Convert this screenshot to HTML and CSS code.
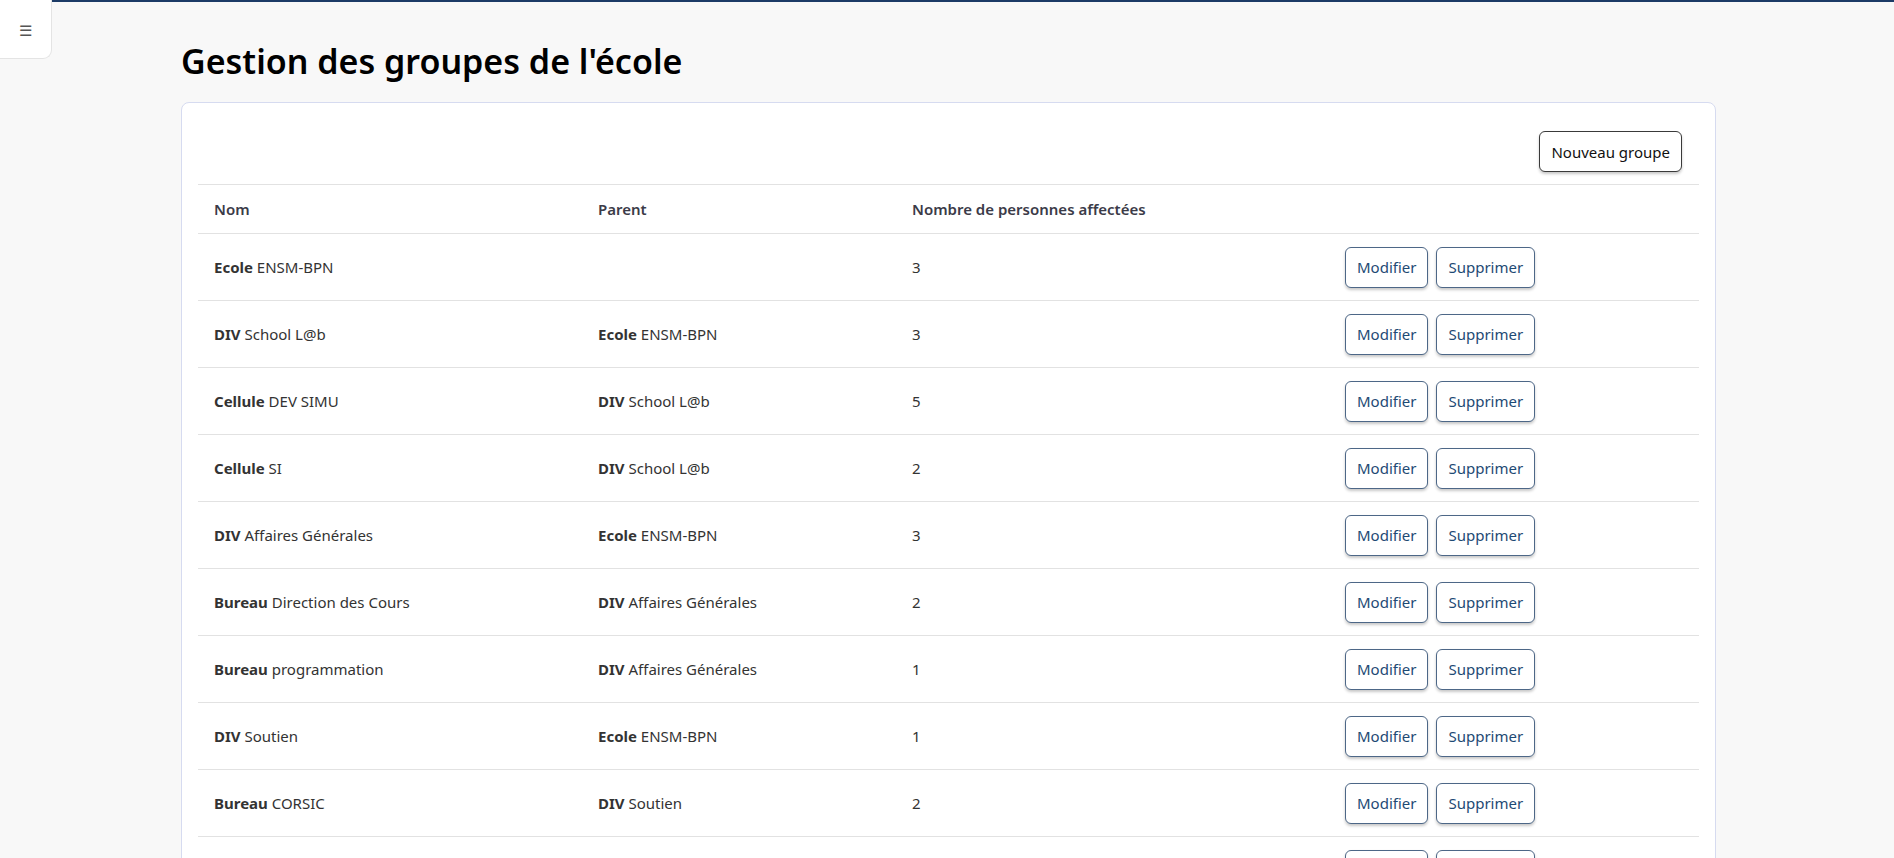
FILE: index.html
```html
<!DOCTYPE html>
<html lang="fr">
<head>
  <meta charset="UTF-8" />
  <meta name="viewport" content="width=device-width, initial-scale=1.0"/>
  <title>Gestion des groupes</title>
  <link rel="stylesheet" href="styles.css">
</head>
<body>
  <button class="menu-toggle" aria-label="Menu">☰</button>

  <main class="page">
    <h1>Gestion des groupes de l'école</h1>

    <div class="card">
      <div class="toolbar">
        <button class="btn btn-dark">Nouveau groupe</button>
      </div>

      <table class="groups">
        <colgroup>
          <col class="col-nom">
          <col class="col-parent">
          <col class="col-count">
          <col class="col-actions">
        </colgroup>
        <thead>
          <tr>
            <th>Nom</th>
            <th>Parent</th>
            <th>Nombre de personnes affectées</th>
            <th></th>
          </tr>
        </thead>
        <tbody id="rows"></tbody>
      </table>
    </div>
  </main>

  <script>
    const groups = [
      { type: 'Ecole', name: 'ENSM-BPN', parent: null, count: 3 },
      { type: 'DIV', name: 'School L@b', parent: ['Ecole', 'ENSM-BPN'], count: 3 },
      { type: 'Cellule', name: 'DEV SIMU', parent: ['DIV', 'School L@b'], count: 5 },
      { type: 'Cellule', name: 'SI', parent: ['DIV', 'School L@b'], count: 2 },
      { type: 'DIV', name: 'Affaires Générales', parent: ['Ecole', 'ENSM-BPN'], count: 3 },
      { type: 'Bureau', name: 'Direction des Cours', parent: ['DIV', 'Affaires Générales'], count: 2 },
      { type: 'Bureau', name: 'programmation', parent: ['DIV', 'Affaires Générales'], count: 1 },
      { type: 'DIV', name: 'Soutien', parent: ['Ecole', 'ENSM-BPN'], count: 1 },
      { type: 'Bureau', name: 'CORSIC', parent: ['DIV', 'Soutien'], count: 2 },
      // row below the fold: only its buttons show
      { type: '', name: '', parent: null, count: '' }
    ];

    const tbody = document.getElementById('rows');

    function label(type, name) {
      const span = document.createElement('span');
      const b = document.createElement('b');
      b.textContent = type;
      span.appendChild(b);
      if (name) span.appendChild(document.createTextNode(' ' + name));
      return span;
    }

    groups.forEach(g => {
      const tr = document.createElement('tr');

      const tdName = document.createElement('td');
      if (g.type) tdName.appendChild(label(g.type, g.name));

      const tdParent = document.createElement('td');
      if (g.parent) tdParent.appendChild(label(g.parent[0], g.parent[1]));

      const tdCount = document.createElement('td');
      tdCount.textContent = g.count;

      const tdActions = document.createElement('td');
      tdActions.className = 'actions';
      ['Modifier', 'Supprimer'].forEach(text => {
        const btn = document.createElement('button');
        btn.className = 'btn btn-outline';
        btn.textContent = text;
        tdActions.appendChild(btn);
      });

      tr.append(tdName, tdParent, tdCount, tdActions);
      tbody.appendChild(tr);
    });
  </script>
</body>
</html>
```

FILE: styles.css
```css
html, body {
  margin: 0;
  height: 100%;
  overflow: hidden;
}

body {
  font-family: 'Noto Sans', 'Open Sans', sans-serif;
  font-size: 15px;
  background: #f8f8f8;
  color: #333;
  border-top: 2px solid #1c3b66;
  box-sizing: border-box;
}

.menu-toggle {
  position: absolute;
  top: 0;
  left: 0;
  width: 52px;
  height: 59px;
  background: #fff;
  border: 1px solid #e4e4e4;
  border-top: none;
  border-left: none;
  border-radius: 0 0 9px 0;
  font-size: 15px;
  color: #555;
  cursor: pointer;
  padding: 4px 0 0 0;
}

.page {
  padding: 34px 178px 0 181px;
}

h1 {
  margin: 0 0 16px;
  font-size: 34px;
  font-weight: 600;
  line-height: 50px;
  color: #000;
}

.card {
  background: #fff;
  border: 1px solid #d6dbf0;
  border-radius: 8px;
  padding: 0 16px 16px;
}

.toolbar {
  display: flex;
  justify-content: flex-end;
  padding: 28px 17px 12px;
  border-bottom: 1px solid #e2e2e2;
}

.btn {
  font-family: inherit;
  font-size: 15px;
  background: #fff;
  border-radius: 6px;
  cursor: pointer;
  height: 41px;
  padding: 0 11px;
  box-shadow: 0 2px 3px rgba(0, 0, 0, 0.22);
}

.btn-dark {
  border: 1px solid #3a3a3a;
  color: #111;
}

.btn-outline {
  border: 1px solid #4d6787;
  color: #1e4a74;
}

.groups {
  width: 100%;
  border-collapse: collapse;
  table-layout: fixed;
}

.col-nom { width: 384px; }
.col-parent { width: 314px; }
.col-count { width: 433px; }

.groups th {
  text-align: left;
  font-weight: 600;
  color: #3b3b48;
  height: 48px;
  padding: 0 16px;
  border-bottom: 1px solid #e2e2e2;
}

.groups td {
  height: 66px;
  padding: 0 16px;
  border-bottom: 1px solid #e2e2e2;
  vertical-align: middle;
}

.groups b {
  font-weight: 700;
}

.actions .btn + .btn {
  margin-left: 8px;
}
```
